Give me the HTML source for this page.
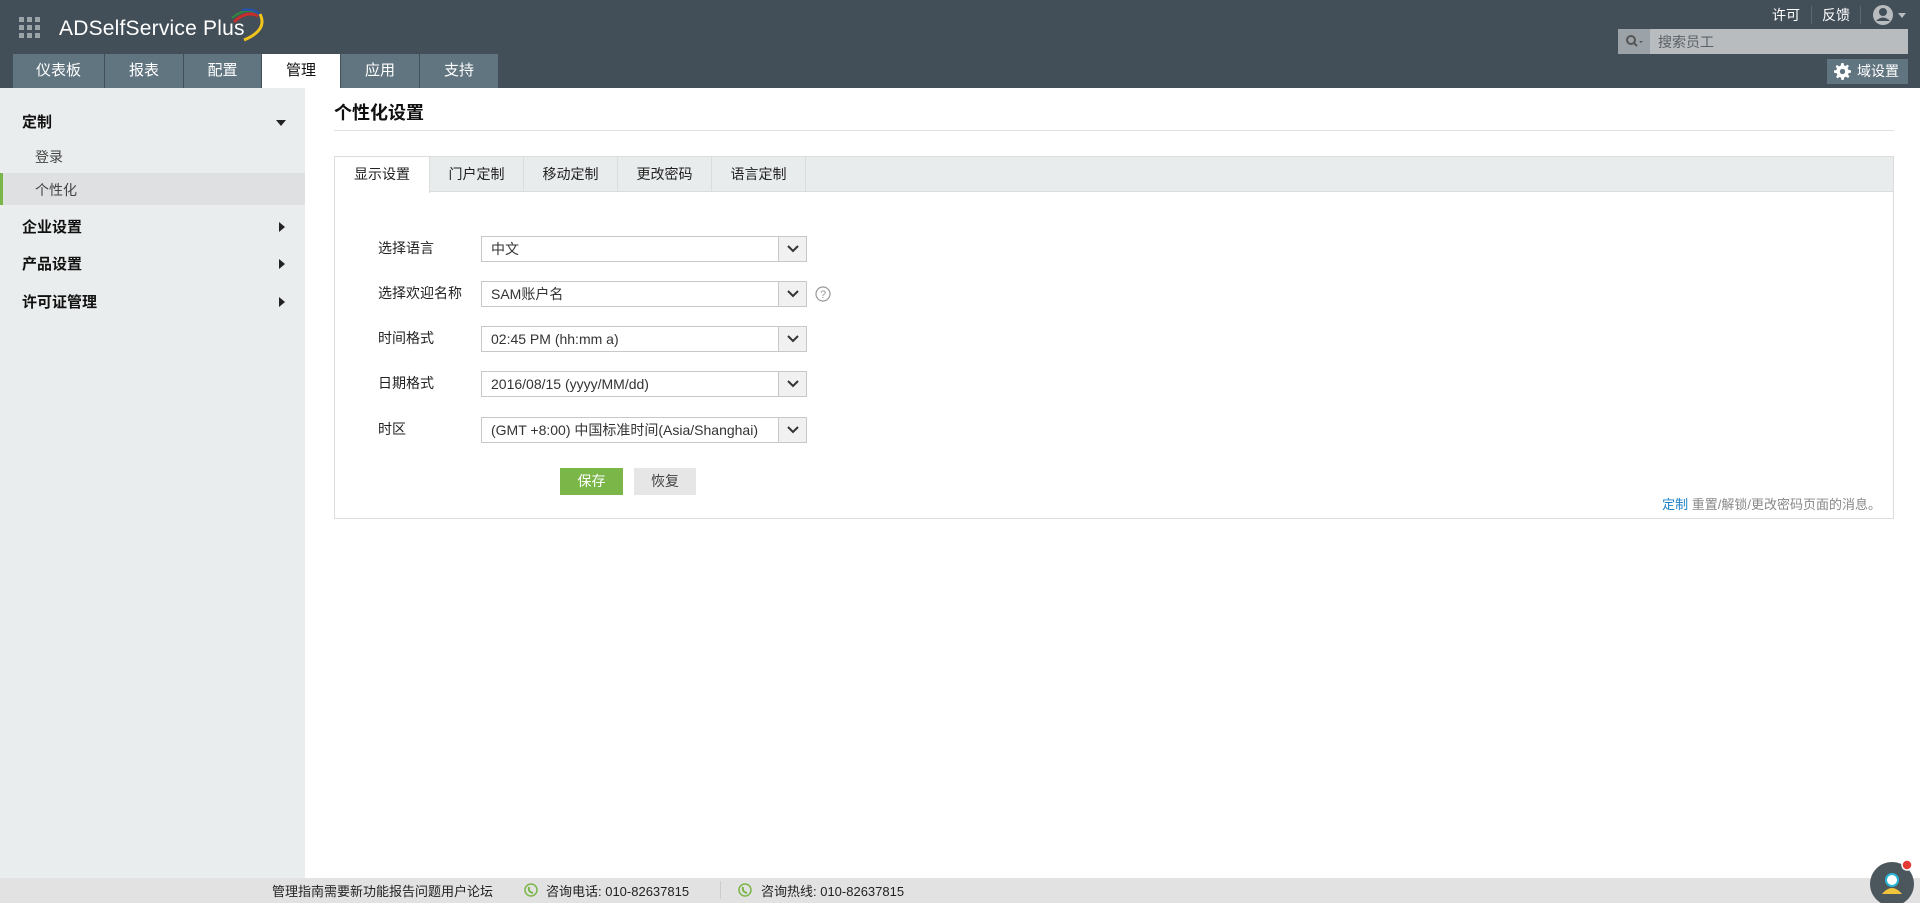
<!DOCTYPE html>
<html><head><meta charset="utf-8">
<style>
*{box-sizing:border-box;margin:0;padding:0}
body{width:1920px;height:903px;overflow:hidden;position:relative;background:#fff;font-family:"Liberation Sans","Noto Sans CJK SC",sans-serif;font-size:14px;color:#333}
.abs{position:absolute}
#hdr{left:0;top:0;width:1920px;height:88px;background:#434f58}
.ntab{position:absolute;top:54px;height:34px;background:#617580;color:#fff;font-size:15px;text-align:center;line-height:34px}
#side{left:0;top:88px;width:305px;height:790px;background:#eaeded}
.s1{position:absolute;left:22px;font-weight:bold;font-size:15px;color:#111}
.arr{position:absolute;left:278px;width:0;height:0;border-top:5px solid transparent;border-bottom:5px solid transparent;border-left:6px solid #222}
.lbl{position:absolute;left:378px;font-size:14px;color:#222}
.sel{position:absolute;left:481px;width:326px;height:26px;border:1px solid #c8c8c8;background:#fff;font-size:14px;line-height:24px;padding-left:9px;color:#333;white-space:nowrap;overflow:hidden}
.sel .dd{position:absolute;right:0;top:0;width:28px;height:24px;background:#f1f1f1;border-left:1px solid #c8c8c8}
.sel .dd svg{position:absolute;left:8px;top:8px}
.ptab{position:absolute;top:0;height:35px;line-height:34px;text-align:center;font-size:14px;color:#222;border-right:1px solid #dcdcdc}
</style></head><body>
<div id="hdr" class="abs">
 <svg class="abs" style="left:19px;top:17px" width="22" height="22"><g fill="#9aa3a8"><rect x="0" y="0" width="5" height="5"/><rect x="8" y="0" width="5" height="5"/><rect x="16" y="0" width="5" height="5"/><rect x="0" y="8" width="5" height="5"/><rect x="8" y="8" width="5" height="5"/><rect x="16" y="8" width="5" height="5"/><rect x="0" y="16" width="5" height="5"/><rect x="8" y="16" width="5" height="5"/><rect x="16" y="16" width="5" height="5"/></g></svg>
 <div class="abs" style="left:59px;top:17px;color:#fff;font-size:21px;letter-spacing:0.2px">ADSelfService <span style="font-weight:normal">Plus</span></div>
 <svg class="abs" style="left:228px;top:6px" width="40" height="36"><path d="M6 16 Q18 4 30 10" stroke="#c62d2d" stroke-width="3" fill="none"/><path d="M4 12 Q18 0 32 8" stroke="#2e8b3e" stroke-width="2" fill="none"/><path d="M14 4 Q30 2 34 12" stroke="#2553a8" stroke-width="2.5" fill="none"/><path d="M32 8 Q40 24 16 34" stroke="#f0c419" stroke-width="3" fill="none"/></svg>
 <div class="ntab" style="left:13px;width:91px">仪表板</div>
 <div class="ntab" style="left:105px;width:78px">报表</div>
 <div class="ntab" style="left:184px;width:77px">配置</div>
 <div class="ntab" style="left:262px;width:78px;background:#fff;color:#111">管理</div>
 <div class="ntab" style="left:341px;width:78px">应用</div>
 <div class="ntab" style="left:420px;width:78px">支持</div>
 <div class="abs" style="left:1772px;top:5px;color:#fff;font-size:14px">许可</div>
 <div class="abs" style="left:1811px;top:6px;width:1px;height:18px;background:#5b6870"></div>
 <div class="abs" style="left:1822px;top:5px;color:#fff;font-size:14px">反馈</div>
 <div class="abs" style="left:1860px;top:6px;width:1px;height:18px;background:#5b6870"></div>
 <svg class="abs" style="left:1872px;top:4px" width="40" height="22"><circle cx="11" cy="11" r="10" fill="#b8bcbf"/><circle cx="11" cy="8" r="4" fill="#434f58"/><path d="M4 17 Q11 10 18 17" fill="#434f58"/><path d="M26 9 L34 9 L30 14Z" fill="#b8bcbf"/></svg>
 <div class="abs" style="left:1618px;top:29px;width:290px;height:25px;background:#b8bcbf"></div>
 <div class="abs" style="left:1618px;top:29px;width:32px;height:25px;background:#9ca3a8"></div>
 <svg class="abs" style="left:1625px;top:34px" width="20" height="15"><circle cx="6" cy="6" r="4" stroke="#555" stroke-width="2" fill="none"/><path d="M9 9 L12 12" stroke="#555" stroke-width="2"/><path d="M14 7 L18 7 L16 9Z" fill="#555"/></svg>
 <div class="abs" style="left:1658px;top:32px;color:#5a6268;font-size:14px">搜索员工</div>
 <div class="abs" style="left:1827px;top:59px;width:81px;height:25px;background:#617580;color:#fff;font-size:14px;line-height:25px;padding-left:30px">域设置</div>
 <svg class="abs" style="left:1834px;top:63px" width="17" height="17" viewBox="0 0 16 16"><path fill="#fff" d="M7 0h2l.4 2.2 1.5.6 1.8-1.3 1.4 1.4-1.3 1.8.6 1.5L16 7v2l-2.2.4-.6 1.5 1.3 1.8-1.4 1.4-1.8-1.3-1.5.6L9 16H7l-.4-2.2-1.5-.6-1.8 1.3-1.4-1.4 1.3-1.8-.6-1.5L0 9V7l2.2-.4.6-1.5L1.5 3.3l1.4-1.4 1.8 1.3 1.5-.6z"/><circle cx="8" cy="8" r="2.5" fill="#617580"/></svg>
</div>
<div id="side" class="abs">
 <div class="s1" style="top:23px">定制</div>
 <div class="abs" style="left:276px;top:32px;border-left:5px solid transparent;border-right:5px solid transparent;border-top:6px solid #222"></div>
 <div class="abs" style="left:35px;top:59px;font-size:14px;color:#444">登录</div>
 <div class="abs" style="left:0;top:85px;width:305px;height:32px;background:#dfe0e1"></div>
 <div class="abs" style="left:0;top:85px;width:3px;height:32px;background:#7ab648"></div>
 <div class="abs" style="left:35px;top:92px;font-size:14px;color:#444">个性化</div>
 <div class="s1" style="top:128px">企业设置</div><div class="arr" style="top:134px;left:279px"></div>
 <div class="s1" style="top:165px">产品设置</div><div class="arr" style="top:171px;left:279px"></div>
 <div class="s1" style="top:203px">许可证管理</div><div class="arr" style="top:209px;left:279px"></div>
</div>
<div class="abs" style="left:334px;top:99px;font-size:18px;font-weight:bold;color:#111">个性化设置</div>
<div class="abs" style="left:334px;top:130px;width:1560px;height:1px;background:#e0e0e0"></div>
<div class="abs" style="left:334px;top:156px;width:1560px;height:363px;border:1px solid #dcdcdc">
 <div class="abs" style="left:0;top:0;width:1558px;height:35px;background:#e9eced;border-bottom:1px solid #dcdcdc"></div>
 <div class="ptab" style="left:0;width:95px;background:#fff;height:36px">显示设置</div>
 <div class="ptab" style="left:95px;width:94px">门户定制</div>
 <div class="ptab" style="left:189px;width:94px">移动定制</div>
 <div class="ptab" style="left:283px;width:94px">更改密码</div>
 <div class="ptab" style="left:377px;width:94px">语言定制</div>
 <div class="abs" style="right:12px;top:337px;font-size:13px;color:#888"><span style="color:#1a7fc4">定制</span> 重置/解锁/更改密码页面的消息。</div>
</div>
<div class="lbl" style="top:238px">选择语言</div>
<div class="lbl" style="top:283px">选择欢迎名称</div>
<div class="lbl" style="top:328px">时间格式</div>
<div class="lbl" style="top:373px">日期格式</div>
<div class="lbl" style="top:419px">时区</div>
<div class="sel" style="top:236px">中文<div class="dd"><svg width="12" height="8"><path d="M1 1 L6 6 L11 1" stroke="#333" stroke-width="2" fill="none"/></svg></div></div>
<div class="sel" style="top:281px">SAM账户名<div class="dd"><svg width="12" height="8"><path d="M1 1 L6 6 L11 1" stroke="#333" stroke-width="2" fill="none"/></svg></div></div>
<div class="sel" style="top:326px">02:45 PM (hh:mm a)<div class="dd"><svg width="12" height="8"><path d="M1 1 L6 6 L11 1" stroke="#333" stroke-width="2" fill="none"/></svg></div></div>
<div class="sel" style="top:371px">2016/08/15 (yyyy/MM/dd)<div class="dd"><svg width="12" height="8"><path d="M1 1 L6 6 L11 1" stroke="#333" stroke-width="2" fill="none"/></svg></div></div>
<div class="sel" style="top:417px">(GMT +8:00) 中国标准时间(Asia/Shanghai)<div class="dd"><svg width="12" height="8"><path d="M1 1 L6 6 L11 1" stroke="#333" stroke-width="2" fill="none"/></svg></div></div>
<svg class="abs" style="left:815px;top:286px" width="16" height="16"><circle cx="8" cy="8" r="7" stroke="#999" stroke-width="1.2" fill="none"/><text x="8" y="12" font-size="11" text-anchor="middle" fill="#999" font-family="Liberation Sans">?</text></svg>
<div class="abs" style="left:560px;top:468px;width:63px;height:27px;background:#7ab648;color:#fff;text-align:center;line-height:27px;font-size:14px">保存</div>
<div class="abs" style="left:634px;top:468px;width:62px;height:27px;background:#e6e6e6;color:#444;text-align:center;line-height:27px;font-size:14px">恢复</div>
<div class="abs" style="left:0;top:878px;width:1920px;height:25px;background:#e2e2e2"></div>
<div class="abs" style="left:272px;top:881px;font-size:13px;color:#222;white-space:nowrap">管理指南需要新功能报告问题用户论坛</div>
<svg class="abs" style="left:524px;top:883px" width="14" height="14"><circle cx="7" cy="7" r="6" stroke="#7ab648" stroke-width="1.5" fill="none"/><path d="M5 4 Q4 9 9 10" stroke="#7ab648" stroke-width="2" fill="none"/></svg>
<div class="abs" style="left:546px;top:881px;font-size:13px;color:#222">咨询电话: 010-82637815</div>
<div class="abs" style="left:720px;top:881px;width:1px;height:18px;background:#ccc"></div>
<svg class="abs" style="left:738px;top:883px" width="14" height="14"><circle cx="7" cy="7" r="6" stroke="#7ab648" stroke-width="1.5" fill="none"/><path d="M5 4 Q4 9 9 10" stroke="#7ab648" stroke-width="2" fill="none"/></svg>
<div class="abs" style="left:761px;top:881px;font-size:13px;color:#222">咨询热线: 010-82637815</div>
<svg class="abs" style="left:1868px;top:858px" width="52" height="45"><circle cx="24" cy="26" r="22" fill="#4b565d"/><circle cx="24" cy="22" r="6" stroke="#2bb5d6" stroke-width="2" fill="#fff"/><path d="M14 36 Q24 24 34 36 Z" fill="#f0c43c"/><circle cx="39" cy="7" r="5" fill="#e53935" stroke="#fff" stroke-width="1.5"/></svg>
</body></html>
